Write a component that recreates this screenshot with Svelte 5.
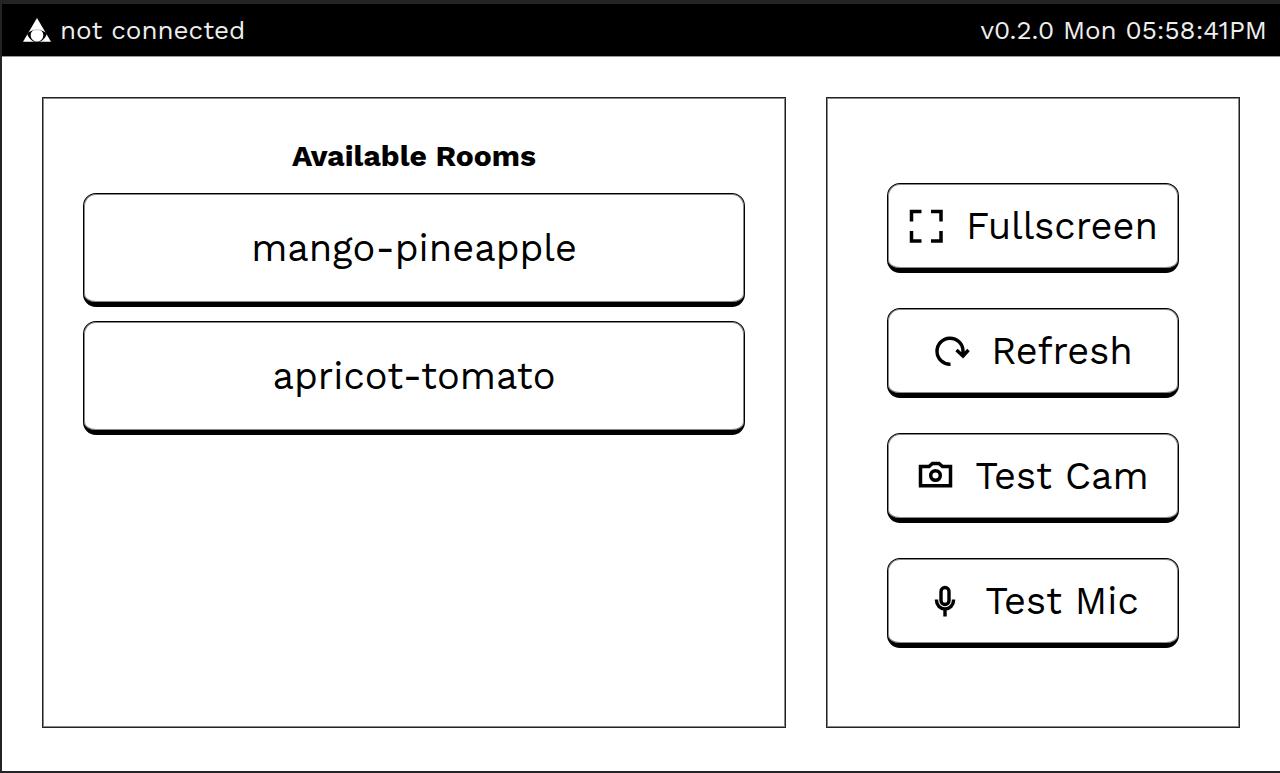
<script>
  const rooms = ['mango-pineapple', 'apricot-tomato'];
  const actions = [
    { icon: 'fullscreen', label: 'Fullscreen' },
    { icon: 'refresh', label: 'Refresh' },
    { icon: 'camera', label: 'Test Cam' },
    { icon: 'mic', label: 'Test Mic' }
  ];
  let status = $state('not connected');
  let clock = $state('Mon 05:58:41PM');
</script>

<div class="app">
  <header>
    <div class="status">
      <svg class="logo" viewBox="0 0 28 24" aria-hidden="true">
        <path fill="#fff" d="M14 0 28 23.800H0Z" />
        <path fill="#000" d="M4 15.500C8.500 10.700 19.500 10.700 24 15.500C23 19 20.500 22 17 23.800H11C7.500 22 5 19 4 15.500Z" />
        <circle cx="14" cy="17.300" r="6.300" fill="#fff" />
        <path fill="none" stroke="#000" stroke-opacity="0.350" stroke-width="0.700" d="M8.500 12.700C11.500 11.500 16.500 11.500 19.500 12.700" />
      </svg>
      <span>{status}</span>
    </div>
    <div>v0.2.0 {clock}</div>
  </header>

  <main>
    <section class="panel rooms">
      <h1>Available Rooms</h1>
      {#each rooms as room}
        <button type="button" class="room">{room}</button>
      {/each}
    </section>

    <section class="panel actions">
      {#each actions as action}
        <button type="button" class="action">
          <svg class="icon" viewBox="0 0 40 40" fill="none" stroke="#000" stroke-width="3.500" aria-hidden="true">
            {#if action.icon === 'fullscreen'}
              <path d="M5.500 15.500V5.500H15.500M25 5.500H35V15.500M35 25V35H25M15.500 35H5.500V25" />
            {:else if action.icon === 'refresh'}
              <path stroke-width="3.400" d="M19.500 33.200A13 13 0 1 1 32 20V24M25.500 19 32 25 37.500 19" />
            {:else if action.icon === 'camera'}
              <path stroke-width="3.500" d="M5.500 10.500H14L17.500 7.500H24L27.500 10.500H35.500V29.700H5.500Z" />
              <circle cx="20.500" cy="19.500" r="4.800" stroke-width="3.500" />
            {:else}
              <rect x="16" y="6.500" width="8" height="17" rx="4" stroke-width="3.400" />
              <path stroke-width="3.400" d="M11.500 18.500V19.500A8.500 8.500 0 0 0 28.500 19.500V18.500M20 28V35.500" />
            {/if}
          </svg>
          <span>{action.label}</span>
        </button>
      {/each}
    </section>
  </main>
</div>

<style>
  :global(body) {
    margin: 0;
  }

  .app {
    box-sizing: border-box;
    min-height: 100vh;
    display: flex;
    flex-direction: column;
    border: solid #242427;
    border-width: 4px 0 2px 2px;
    background: #fff;
    color: #000;
    font-family: 'Work Sans', Inter, sans-serif;
  }

  header {
    display: flex;
    align-items: center;
    justify-content: space-between;
    padding: 0 13px 0 21px;
    min-height: 52px;
    border-bottom: 1px solid #999;
    background: #000;
    color: #eee;
    font-size: 26px;
    line-height: 32px;
  }

  .status {
    display: flex;
    align-items: center;
    gap: 9px;
  }

  .logo {
    width: 28px;
    height: 24px;
  }

  main {
    flex: 1;
    display: flex;
    flex-wrap: wrap;
    gap: 40px;
    padding: 40px 40px 43px;
  }

  .panel {
    box-sizing: border-box;
    display: flex;
    flex-direction: column;
    border: 1px solid #222;
    box-shadow: inset 0 0 0 1px #888;
  }

  .rooms {
    flex: 1;
    gap: 14px;
    padding: 40px;
  }

  .actions {
    gap: 35px;
    padding: 85px 60px 60px;
  }

  h1 {
    margin: 0;
    padding-bottom: 5px;
    font-size: 30px;
    line-height: 36px;
    text-align: center;
  }

  button {
    box-sizing: border-box;
    border: 1px solid #000;
    border-bottom-width: 5px;
    border-radius: 13px;
    box-shadow: inset 0 0 0 1px #888;
    background: #fff;
    color: #000;
    font-family: inherit;
    font-size: 38px;
    line-height: 46px;
    cursor: pointer;
  }

  .room {
    min-height: 114px;
    padding: 20px;
  }

  .action {
    display: flex;
    align-items: center;
    justify-content: center;
    gap: 20px;
    min-width: 292px;
    min-height: 90px;
    padding: 10px 12px 10px 10px;
  }

  .icon {
    flex: none;
    width: 40px;
    height: 40px;
  }
</style>
